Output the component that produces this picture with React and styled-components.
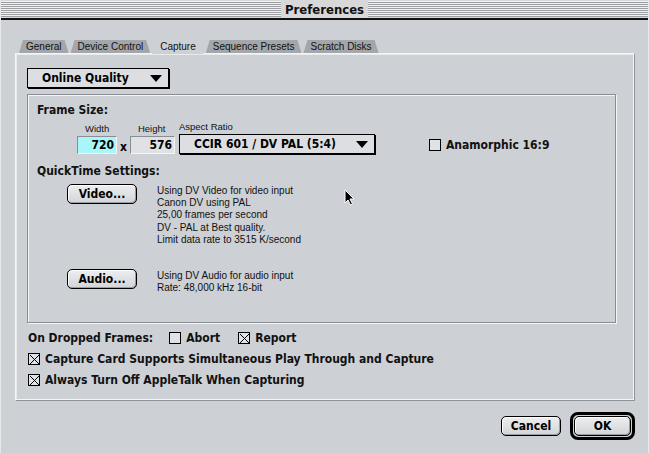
import styled, { createGlobalStyle } from 'styled-components';

const GlobalStyle = createGlobalStyle`
  html, body {
    margin: 0;
    padding: 0;
    background: #cdd0d4;
  }
  * { box-sizing: border-box; }
`;

const BOLD = `"DejaVu Sans Condensed", "Liberation Sans", sans-serif`;
const SMALL = `"Liberation Sans", Arial, sans-serif`;

const TABS = ['General', 'Device Control', 'Capture', 'Sequence Presets', 'Scratch Disks'];

const VIDEO_LINES = [
  'Using DV Video for video input',
  'Canon DV using PAL',
  '25,00 frames per second',
  'DV - PAL at Best quality.',
  'Limit data rate to 3515 K/second',
];

const AUDIO_LINES = ['Using DV Audio for audio input', 'Rate: 48,000 kHz 16-bit'];

function Arrow() {
  return (
    <svg width="12" height="7" viewBox="0 0 12 7">
      <path d="M0 0 H12 L6 7 Z" fill="#000" />
    </svg>
  );
}

function Check({ checked }) {
  return (
    <Box>
      {checked && (
        <svg width="9" height="9" viewBox="0 0 9 9">
          <path d="M0 0 L9 9 M9 0 L0 9" stroke="#000" strokeWidth="1" />
        </svg>
      )}
    </Box>
  );
}

export default function App() {
  return (
    <Window>
      <GlobalStyle />
      <TitleBar>
        <Title>Preferences</Title>
      </TitleBar>
      <Body>
        <TabRow>
          {TABS.map((t) => (
            <Tab key={t} $active={t === 'Capture'}>{t}</Tab>
          ))}
        </TabRow>
        <Pane>
          <Popup $width={142}>
            <span>Online Quality</span>
            <Arrow />
          </Popup>
          <Group>
            <GroupTitle>Frame Size:</GroupTitle>
            <SizeRow>
              <Field>
                <FieldLabel $left={8}>Width</FieldLabel>
                <NumberBox $bg="#a8f6f8" $width={40}>720</NumberBox>
              </Field>
              <Times>x</Times>
              <Field>
                <FieldLabel $left={8}>Height</FieldLabel>
                <NumberBox $bg="#dfe1e4" $width={45}>576</NumberBox>
              </Field>
              <Field>
                <FieldLabel $left={0}>Aspect Ratio</FieldLabel>
                <Popup $width={196}>
                  <span>CCIR 601 / DV PAL (5:4)</span>
                  <Arrow />
                </Popup>
              </Field>
              <CheckItem $ml={50} $mb={2}>
                <Check />
                <span>Anamorphic 16:9</span>
              </CheckItem>
            </SizeRow>
            <GroupTitle $mt={10}>QuickTime Settings:</GroupTitle>
            <SettingRow>
              <Button>Video...</Button>
              <Desc>
                {VIDEO_LINES.map((l) => (
                  <div key={l}>{l}</div>
                ))}
              </Desc>
            </SettingRow>
            <SettingRow $mt={23}>
              <Button>Audio...</Button>
              <Desc>
                {AUDIO_LINES.map((l) => (
                  <div key={l}>{l}</div>
                ))}
              </Desc>
            </SettingRow>
            <Cursor viewBox="0 0 11 17" width="11" height="17">
              <path d="M1 1 L1 14 L4 11 L6.5 16 L8.5 15 L6 10 L10 10 Z" fill="#000" stroke="#fff" strokeWidth="1" />
            </Cursor>
          </Group>
          <OptionRow $mt={5}>
            <OptionLabel>On Dropped Frames:</OptionLabel>
            <CheckItem $ml={16}>
              <Check />
              <span>Abort</span>
            </CheckItem>
            <CheckItem $ml={18}>
              <Check checked />
              <span>Report</span>
            </CheckItem>
          </OptionRow>
          <OptionRow>
            <CheckItem>
              <Check checked />
              <span>Capture Card Supports Simultaneous Play Through and Capture</span>
            </CheckItem>
          </OptionRow>
          <OptionRow>
            <CheckItem>
              <Check checked />
              <span>Always Turn Off AppleTalk When Capturing</span>
            </CheckItem>
          </OptionRow>
        </Pane>
        <Footer>
          <Button $width={60}>Cancel</Button>
          <DefaultRing>
            <Button $width={57}>OK</Button>
          </DefaultRing>
        </Footer>
      </Body>
    </Window>
  );
}

const Window = styled.div`
  width: 649px;
  height: 453px;
  background: #cdd0d4;
  display: flex;
  flex-direction: column;
  border-left: 1px solid #e6e8ea;
  border-right: 1px solid #e6e8ea;
  overflow: hidden;
`;

const TitleBar = styled.div`
  height: 20px;
  border-bottom: 2px solid #111;
  display: flex;
  align-items: center;
  justify-content: center;
  background: repeating-linear-gradient(
    to bottom,
    #f2f2f2 0px,
    #f2f2f2 1px,
    #9c9ea1 1px,
    #9c9ea1 2px
  );
  background-size: 100% 16px;
  background-position: 0 1px;
  background-repeat: no-repeat;
  background-color: #d8d8d8;
`;

const Title = styled.div`
  font-family: ${BOLD};
  font-weight: bold;
  font-size: 13px;
  color: #111;
  background: #d8d8d8;
  padding: 0 4px;
  line-height: 17px;
`;

const Body = styled.div`
  flex: 1;
  padding: 19px 14px 0 14px;
  display: flex;
  flex-direction: column;
`;

const TabRow = styled.div`
  display: flex;
  gap: 2px;
  padding-left: 4px;
  height: 14px;
  align-items: flex-end;
  position: relative;
  z-index: 1;
`;

const Tab = styled.div`
  font-family: ${SMALL};
  font-size: 10px;
  height: ${(p) => (p.$active ? '16px' : '13px')};
  margin-bottom: ${(p) => (p.$active ? '-1px' : '0')};
  padding: 0 ${(p) => (p.$active ? 8 : 7)}px;
  display: flex;
  align-items: center;
  color: #111;
  background: ${(p) => (p.$active ? '#cdd0d4' : '#a3a6aa')};
  clip-path: polygon(4px 0, calc(100% - 4px) 0, 100% 100%, 0 100%);
  border-radius: 3px 3px 0 0;
`;

const Pane = styled.div`
  height: 347px;
  border: 1px solid #f4f5f6;
  box-shadow: 1px 1px 0 #8f9296, inset 1px 1px 0 #e9eaec;
  padding: 14px 11px 0 11px;
  display: flex;
  flex-direction: column;
`;

const Popup = styled.div`
  width: ${(p) => p.$width}px;
  height: 20px;
  border: 1px solid #000;
  box-shadow: 1px 1px 0 #000;
  background: #dcdee1;
  display: flex;
  align-items: center;
  justify-content: space-between;
  padding: 0 6px 0 14px;
  font-family: ${BOLD};
  font-weight: bold;
  font-size: 12px;
  color: #000;
`;

const Group = styled.div`
  position: relative;
  margin-top: 6px;
  height: 229px;
  width: 589px;
  border: 1px solid #8a8d91;
  box-shadow: inset 1px 1px 0 #f4f5f6, 1px 1px 0 #f4f5f6;
  padding: 8px 10px 0 9px;
`;

const GroupTitle = styled.div`
  font-family: ${BOLD};
  font-weight: bold;
  font-size: 12px;
  color: #111;
  margin-top: ${(p) => p.$mt || 0}px;
`;

const SizeRow = styled.div`
  display: flex;
  align-items: flex-end;
  margin-top: 17px;
  padding-left: 40px;
`;

const Field = styled.div`
  position: relative;
  margin-right: 4px;
`;

const FieldLabel = styled.div`
  position: absolute;
  bottom: 100%;
  left: ${(p) => p.$left}px;
  margin-bottom: 2px;
  font-family: ${SMALL};
  font-size: 9.5px;
  color: #111;
  white-space: nowrap;
`;

const NumberBox = styled.div`
  width: ${(p) => p.$width}px;
  height: 18px;
  background: ${(p) => p.$bg};
  border-top: 1px solid #8a8d91;
  border-left: 1px solid #8a8d91;
  border-bottom: 1px solid #f4f5f6;
  border-right: 1px solid #f4f5f6;
  font-family: ${BOLD};
  font-weight: bold;
  font-size: 12px;
  text-align: right;
  padding-right: 2px;
  line-height: 16px;
  color: #000;
`;

const Times = styled.div`
  font-family: ${BOLD};
  font-weight: bold;
  font-size: 12px;
  margin: 0 3px 0 -1px;
  line-height: 14px;
`;

const CheckItem = styled.div`
  display: flex;
  align-items: center;
  gap: 5px;
  margin-left: ${(p) => p.$ml || 0}px;
  margin-bottom: ${(p) => p.$mb || 0}px;
  font-family: ${BOLD};
  font-weight: bold;
  font-size: 12px;
  color: #111;
  white-space: nowrap;
`;

const Box = styled.div`
  width: 12px;
  height: 12px;
  border: 1px solid #000;
  background: #e0e2e5;
  display: flex;
  align-items: center;
  justify-content: center;
  flex: none;
`;

const SettingRow = styled.div`
  display: flex;
  align-items: flex-start;
  margin-top: ${(p) => (p.$mt !== undefined ? p.$mt : 6)}px;
  padding-left: 30px;
  gap: 20px;
`;

const Button = styled.div`
  width: ${(p) => p.$width || 70}px;
  height: 20px;
  border: 1px solid #000;
  border-radius: 5px;
  background: linear-gradient(#eceef0, #d2d4d7);
  box-shadow: inset -1px -1px 0 #9a9da1, inset 1px 1px 0 #fff;
  display: flex;
  align-items: center;
  justify-content: center;
  font-family: ${BOLD};
  font-weight: bold;
  font-size: 12px;
  color: #000;
  flex: none;
`;

const Desc = styled.div`
  font-family: ${SMALL};
  font-size: 10px;
  line-height: 12.2px;
  color: #111;
  padding-top: 1px;
`;

const Cursor = styled.svg`
  position: absolute;
  left: 316px;
  top: 94px;
`;

const OptionRow = styled.div`
  display: flex;
  align-items: center;
  height: 20px;
  margin-top: ${(p) => p.$mt || 1}px;
  padding-left: 1px;
`;

const OptionLabel = styled.div`
  font-family: ${BOLD};
  font-weight: bold;
  font-size: 12px;
  color: #111;
`;

const Footer = styled.div`
  display: flex;
  justify-content: flex-end;
  align-items: center;
  gap: 9px;
  margin-top: 12px;
  padding-right: 0;
`;

const DefaultRing = styled.div`
  border: 3px solid #000;
  border-radius: 8px;
  padding: 1px;
  margin-right: -1px;
`;
